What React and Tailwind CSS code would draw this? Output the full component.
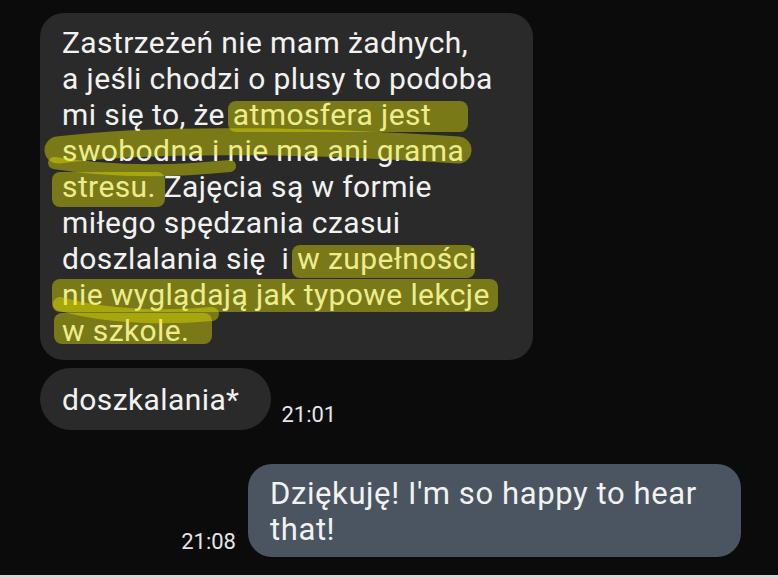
export default function App() {
  return (
    <div
      className="box-border flex h-[578px] w-full flex-col border-b-[3px] border-[#d9d9d9] bg-[#0b0b0b] pl-[40px] pt-[13px] text-[#f2f2f2]"
      style={{ fontFamily: "Roboto, 'Noto Sans', sans-serif" }}
    >
      {/* first incoming message with marker highlights */}
      <div className="relative w-[493px] rounded-[24px] bg-[#2a2a2a] pb-[11px] pl-[22px] pt-[12px] text-[30px] leading-[36px] tracking-[0.4px] whitespace-pre">
        <div>Zastrzeżeń nie mam żadnych,</div>
        <div>a jeśli chodzi o plusy to podoba</div>
        <div>mi się to, że atmosfera jest</div>
        <div>swobodna i nie ma ani grama</div>
        <div>stresu. Zajęcia są w formie</div>
        <div>miłego spędzania czasui</div>
        <div>doszlalania się  i w zupełności</div>
        <div>nie wyglądają jak typowe lekcje</div>
        <div>w szkole.</div>

        <svg
          className="pointer-events-none absolute inset-0 h-full w-full"
          viewBox="40 13 493 347"
          preserveAspectRatio="none"
        >
          <g fill="rgba(232,230,0,0.42)" stroke="none">
            <rect x="228" y="101" width="240" height="31" rx="8" />
            <rect x="52" y="172" width="113" height="35" rx="8" />
            <rect x="292" y="245" width="183" height="33" rx="8" />
            <rect x="52" y="279" width="446" height="33" rx="8" />
            <rect x="54" y="313" width="158" height="31" rx="8" />
          </g>
          <g fill="none" stroke="rgba(232,230,0,0.42)" strokeLinecap="round">
            <path d="M58 150 C 160 137, 320 141, 458 150" strokeWidth="27" />
            <path d="M54 163 C 110 172, 170 172, 230 166" strokeWidth="12" />
            <path d="M60 304 C 110 318, 170 318, 212 314" strokeWidth="14" />
          </g>
        </svg>
      </div>

      {/* correction */}
      <div className="mt-[8px] flex items-end">
        <div className="rounded-full bg-[#2a2a2a] pb-[12px] pl-[22px] pr-[32px] pt-[14px] text-[30px] leading-[36px] tracking-[0.4px]">
          doszkalania*
        </div>
        <span className="mb-[4px] ml-[10px] text-[22px] leading-none text-[#e6e6e6]">21:01</span>
      </div>

      {/* reply */}
      <div className="mr-[37px] mt-[34px] flex items-end justify-end gap-[12px]">
        <span className="mb-[4px] text-[22px] leading-none text-[#e6e6e6]">21:08</span>
        <div className="w-[493px] rounded-[24px] bg-[#4a5561] pb-[9px] pl-[22px] pr-[20px] pt-[12px] text-[31px] leading-[36px] tracking-[0.6px]">
          Dziękuję! I'm so happy to hear
          <br />
          that!
        </div>
      </div>
    </div>
  );
}
